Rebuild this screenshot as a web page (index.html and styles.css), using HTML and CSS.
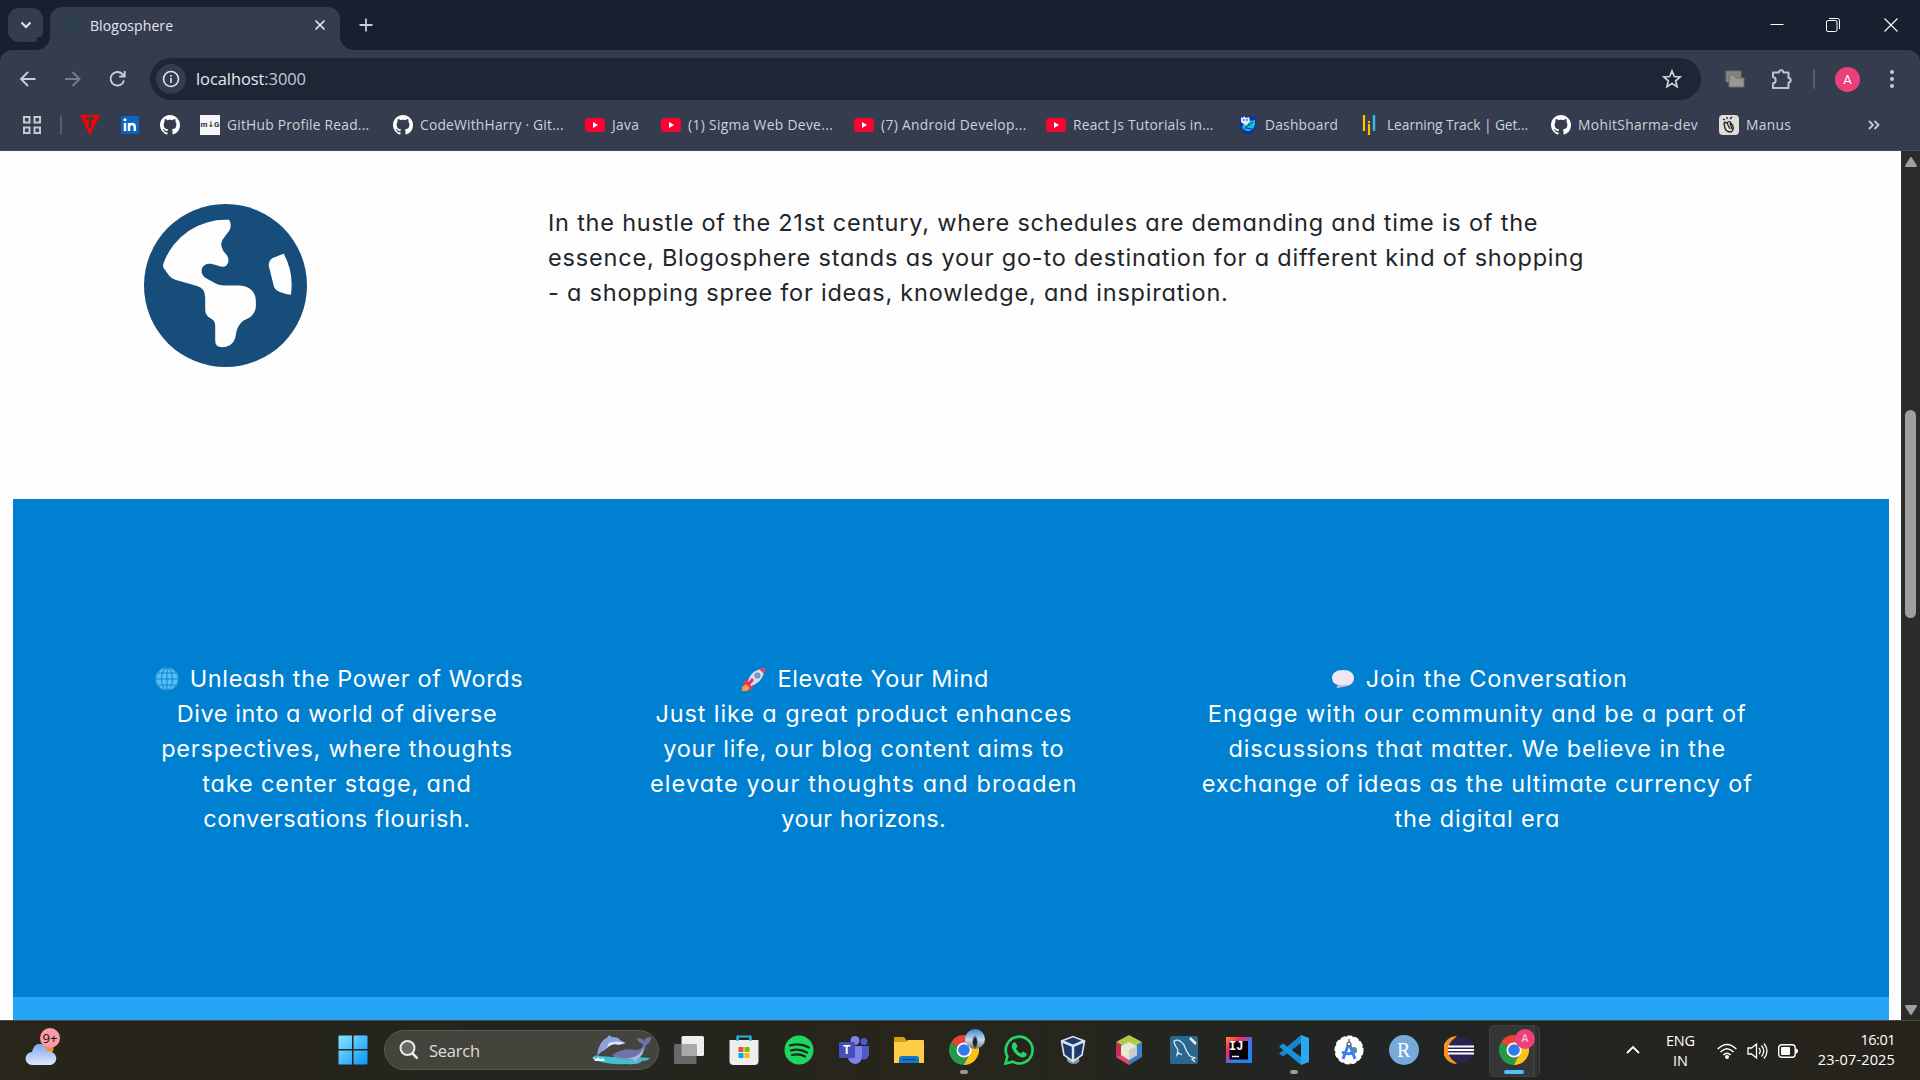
FILE: index.html
```html
<!DOCTYPE html>
<html lang="en"><head><meta charset="utf-8"><title>Blogosphere</title><link rel="stylesheet" href="styles.css"></head>
<body>
<svg class="defs" aria-hidden="true">
<symbol id="gh" viewBox="0 0 16 16"><path fill="#fff" d="M8 0C3.58 0 0 3.58 0 8c0 3.54 2.29 6.53 5.47 7.59.4.07.55-.17.55-.38 0-.19-.01-.82-.01-1.49-2.01.37-2.53-.49-2.69-.94-.09-.23-.48-.94-.82-1.13-.28-.15-.68-.52-.01-.53.63-.01 1.08.58 1.23.82.72 1.21 1.87.87 2.33.66.07-.52.28-.87.51-1.07-1.78-.2-3.64-.89-3.64-3.95 0-.87.31-1.59.82-2.15-.08-.2-.36-1.02.08-2.12 0 0 .67-.21 2.2.82.64-.18 1.32-.27 2-.27s1.36.09 2 .27c1.53-1.04 2.2-.82 2.2-.82.44 1.1.16 1.92.08 2.12.51.56.82 1.27.82 2.15 0 3.07-1.87 3.75-3.65 3.95.29.25.54.73.54 1.48 0 1.07-.01 1.93-.01 2.2 0 .21.15.46.55.38A8.01 8.01 0 0 0 16 8c0-4.42-3.58-8-8-8z"/></symbol>
<symbol id="yt" viewBox="0 0 20 20"><rect y="3" width="20" height="14" rx="3.5" fill="#ff0033"/><path d="M8 7l5 3-5 3z" fill="#fff"/></symbol>
<symbol id="chrome" viewBox="0 0 48 48"><path d="M24 24 3.2 12A24 24 0 0 1 44.8 12z" fill="#ea4335"/><path d="M24 24 44.8 12A24 24 0 0 1 24 48z" fill="#fbc116"/><path d="M24 24 24 48A24 24 0 0 1 3.2 12z" fill="#279847"/><path d="M24 12.5H44.8L34 30z" fill="#fbc116"/><path d="M34 29.5 24 48 14 30z" fill="#279847"/><path d="M34 29.5 24 48h3l16-24z" fill="#fbc116"/><circle cx="24" cy="24" r="12" fill="#fff"/><circle cx="24" cy="24" r="9.3" fill="#3079ee"/></symbol>
</svg>
<header class="tabstrip">
 <button class="tabsearch"><svg width="12" height="8" viewBox="0 0 12 8"><path d="M1.5 1.5 6 6l4.500-4.500" fill="none" stroke="#e3e6ee" stroke-width="2"/></svg></button>
 <div class="tab"><svg class="fav" width="20" height="20" viewBox="0 0 20 20" fill="none" stroke="#21444f" stroke-width="1.300"><path d="M1 1 10 19 19 1H10M4.500 1 10 12.500 14 5H10"/></svg><span>Blogosphere</span><svg class="close" width="12" height="12" viewBox="0 0 12 12"><path d="M1.500 1.500l9 9m0-9-9 9" stroke="#e3e6ee" stroke-width="1.700"/></svg></div>
 <svg class="plus" width="14" height="14" viewBox="0 0 14 14"><path d="M7 .5v13M.5 7h13" stroke="#c5cde0" stroke-width="1.800"/></svg>
 <div class="winctl"><svg width="14" height="14" viewBox="0 0 14 14"><path d="M.5 6.500h13" stroke="#fff"/></svg><svg width="14" height="14" viewBox="0 0 14 14" fill="none" stroke="#fff"><rect x=".5" y="2.500" width="10.500" height="11" rx="1.500"/><path d="M3 .5h8.500a2 2 0 0 1 2 2V11"/></svg><svg width="14" height="14" viewBox="0 0 14 14"><path d="M.5.5l13 13m0-13-13 13" stroke="#fff" stroke-width="1.100"/></svg></div>
</header>
<nav class="toolbar">
 <svg class="ic" viewBox="0 0 20 20" fill="none" stroke="#c5cde0" stroke-width="1.900"><path d="M17.500 10H3M10 3 3 10l7 7"/></svg>
 <svg class="ic" viewBox="0 0 20 20" fill="none" stroke="#747c8d" stroke-width="1.900"><path d="M2 10h14.500M9.500 3l7 7-7 7"/></svg>
 <svg class="ic" viewBox="0 0 20 20" fill="none" stroke="#c5cde0" stroke-width="1.900"><path d="M16 11.500A6.800 6.800 0 1 1 14.300 5L16.500 7.300M16.700 2v5.500h-5.500"/></svg>
 <div class="omnibox"><span class="info"><svg width="18" height="18" viewBox="0 0 18 18"><circle cx="9" cy="9" r="7.500" fill="none" stroke="#e3e6ee" stroke-width="1.600"/><path d="M9 8v5M9 5v1.700" stroke="#e3e6ee" stroke-width="1.600"/></svg></span><span class="url">localhost<i>:3000</i></span>
 <svg class="star" width="20" height="20" viewBox="0 0 20 20" fill="none" stroke="#cfd3de" stroke-width="1.700"><path d="M10 2l2.300 5.500 5.900.5-4.500 3.900 1.400 5.800L10 14.600l-5.100 3.100 1.400-5.800L1.800 8l5.900-.5z"/></svg></div>
 <svg class="ext" width="20" height="18" viewBox="0 0 20 18" stroke="#6c6c6c"><path d="M1 1h15v11H1z" fill="#858580"/><path d="M4 5h5l2 3h8v9H4z" fill="#989892"/></svg>
 <svg class="puz" width="22" height="22" viewBox="0 0 22 22"><path d="M2 4.500H8a2.200 2.200 0 0 1 4.400 0H17.500V10a2.200 2.200 0 0 1 0 4.400V20H2V15.500a3.300 3.300 0 0 0 0-6.500z" fill="none" stroke="#b9c3da" stroke-width="2" stroke-linejoin="round"/></svg>
 <i class="sep"></i><b class="avatar">A</b>
 <svg width="4" height="18" viewBox="0 0 4 18" fill="#c5cde0"><circle cx="2" cy="2" r="2"/><circle cx="2" cy="9" r="2"/><circle cx="2" cy="16" r="2"/></svg>
</nav>
<nav class="bookmarks">
 <svg class="bi" viewBox="0 0 20 20" fill="none" stroke="#c7c9d0" stroke-width="2"><path d="M2 2h5.500v5.500H2zM12.500 2H18v5.500h-5.500zM2 12.500h5.500V18H2zM12.500 12.500H18V18h-5.500z"/></svg>
 <i class="sep"></i>
 <svg class="bi" viewBox="0 0 20 20"><path d="M0 0h20L10 20z" fill="#f00"/><path d="M5.500 3.500h9M10 4v9" stroke="#343c4e" stroke-width="2.500"/></svg>
 <svg class="bi" viewBox="0 0 20 20"><rect x="1" y="1" width="18" height="18" rx="1.500" fill="#0a66c2"/><path d="M5 8v8M9 8v8M9 12c0-4 5.800-4 5.800 0v4" fill="none" stroke="#fff" stroke-width="2.500"/><circle cx="5" cy="4.800" r="1.500" fill="#fff"/></svg>
 <svg class="bi"><use href="#gh"/></svg>
 <a><b class="mg">m↓G</b><span>GitHub Profile Read...</span></a>
 <a><svg class="bi"><use href="#gh"/></svg><span>CodeWithHarry · Git...</span></a>
 <a><svg class="bi"><use href="#yt"/></svg><span class="wide">Java</span></a>
 <a><svg class="bi"><use href="#yt"/></svg><span class="wide">(1) Sigma Web Deve...</span></a>
 <a><svg class="bi"><use href="#yt"/></svg><span class="wide">(7) Android Develop...</span></a>
 <a><svg class="bi"><use href="#yt"/></svg><span>React Js Tutorials in...</span></a>
 <a><svg class="bi" viewBox="0 0 20 20"><path d="M2 1h16v11q-1 5-8 8-7-3-8-8z" fill="#0a35a5"/><path d="M4 13q1-7 13-8 1 9-6 11-5 0-7-3" fill="#19c0cf"/><path d="M6 14l9-7M8 13l6 1M11 10l-1-3" stroke="#0a35a5"/><path d="M3 2l2 1 1-2 2 2 3-1 1 4-2 3-3 1-4-3z" fill="#e4ecff"/><path d="M6 4v2M9 4v2" stroke="#234"/></svg><span>Dashboard</span></a>
 <a><svg class="bi" viewBox="0 0 20 20"><path d="M4 0v16M9 9v11M9 6v2" stroke="#ffc400" stroke-width="2.200"/><path d="M14 0v16" stroke="#38b6f0" stroke-width="2.500"/></svg><span class="tight">Learning Track | Get...</span></a>
 <a><svg class="bi"><use href="#gh"/></svg><span class="wide">MohitSharma-dev</span></a>
 <a><svg class="bi" viewBox="0 0 20 20"><rect width="20" height="20" rx="4" fill="#deddd9"/><path d="M5 9q0-3 2-1l2-1q2-1 3 1l2 3q1 4-2 6-5 0-6-4zM8 8l3 6M11 8l2 6M6 5 4 4M8 4V2M11 4l2-2" fill="none" stroke="#222" stroke-width="1.300"/></svg><span class="wide">Manus</span></a>
 <svg width="13" height="12" viewBox="0 0 13 12" fill="none" stroke="#c7cad3" stroke-width="1.800"><path d="M1 2l4 4-4 4M6.500 2l4 4-4 4"/></svg>
</nav>
<div class="viewport">
 <main class="page">
  <section class="intro">
   <svg class="globe" viewBox="143.800 204.200 163 163"><circle cx="225.300" cy="285.700" r="81.500" fill="#164d7a"/><path fill="#fdfdfd" d="M229 220Q232 226 229 231L223 239Q219 244 223 251L227 256Q230 262 226 266Q223 268 218 266L211 264Q205 263 202 268Q200 274 205 278L216 284Q219 285.700 224 285.700H240Q247 286 252 291Q256 296 255.700 302V307Q255 314 249 318L243 321Q237 326 236 333Q235 345 226 347Q215 349 215 341V326Q215 321 211 319Q205 316 205 310V298Q205 288 196 286L175 280Q171 278.500 169 276L164 269Q162 267 163.500 263A65.700 65.700 0 0 1 228 220z"/><path fill="#fdfdfd" d="M283.600 254Q282 254.500 273 258Q267.500 261 268.800 267L273 284Q274 290 279 292Q285 294.500 290.700 295A66 66 0 0 0 283.600 254z"/></svg>
   <p class="lead">In the hustle of the 21st century, where schedules are demanding and time is of the<br><span>essence, Blogosphere stands as your go-to destination for a different kind of shopping</span><br>- a shopping spree for ideas, knowledge, and inspiration.</p>
  </section>
  <section class="features">
   <article class="words"><h3><svg class="emo" viewBox="0 0 24 24"><circle cx="12" cy="12" r="11.800" fill="#4cc4fb"/><g fill="none" stroke="#1c78bd" stroke-width=".9"><circle cx="12" cy="12" r="11.400"/><ellipse cx="12" cy="12" rx="5.500" ry="11.200"/><path d="M12 1v22M1 12h22M3 6h18M3 18h18"/></g></svg><span>Unleash the Power of Words</span></h3><p><span>Dive into a world of diverse</span><br><span>perspectives, where thoughts</span><br><span>take center stage, and</span><br><span>conversations flourish.</span></p></article>
   <article class="mind"><h3><svg class="emo" viewBox="0 0 24 24"><path d="M5 12 1 15l1 3 5-1zM12 19l-3 4-3-1 1-5z" fill="#ee3161"/><path d="M4 17l4 4-3 3H0v-4z" fill="#ff9838"/><path d="M6 15Q8 3 23 1q-2 15-14 18z" fill="#dedce9"/><path d="M17 2q3-1 6-1 0 3-1 6z" fill="#f03b5d"/><circle cx="15.500" cy="8.500" r="3" fill="#738eb5"/><circle cx="15.500" cy="8.500" r="1.700" fill="#40b7ed"/><path d="M6 18l5-6" stroke="#e92d63" stroke-width="3"/></svg><span>Elevate Your Mind</span></h3><p><span>Just like a great product enhances</span><br><span>your life, our blog content aims to</span><br><span>elevate your thoughts and broaden</span><br><span>your horizons.</span></p></article>
   <article class="talk"><h3><svg class="emo" viewBox="0 0 24 24"><path d="M12 3c7 0 11 3.500 11 8s-4 8.500-10 8.500l-7 1.500 1-3C3 17 1 14.500 1 11c0-4.500 4-8 11-8z" fill="#efe5f3"/><path d="M3 16q7 4 16 1-4 3-8 2.500L5.500 21l1.500-3z" fill="#c9acdb"/></svg><span>Join the Conversation</span></h3><p><span>Engage with our community and be a part of</span><br><span>discussions that matter. We believe in the</span><br><span>exchange of ideas as the ultimate currency of</span><br><span>the digital era</span></p></article>
  </section>
  <section class="next"></section>
 </main>
 <aside class="scroll"><svg width="12" height="10" viewBox="0 0 12 10"><path d="M6 1 11 9H1z" fill="#9f9f9f" stroke="#9f9f9f" stroke-linejoin="round" stroke-width="2"/></svg><i></i><svg width="12" height="10" viewBox="0 0 12 10"><path d="M6 9 11 1H1z" fill="#9f9f9f" stroke="#9f9f9f" stroke-linejoin="round" stroke-width="2"/></svg></aside>
</div>
<footer class="taskbar">
 <div class="weather"><svg width="32" height="22" viewBox="0 0 32 22"><defs><linearGradient id="cl" x2="0" y2="1"><stop stop-color="#7fa5ed"/><stop offset="1" stop-color="#dfe9fc"/></linearGradient></defs><circle cx="24" cy="5" r="4.500" fill="#f58b24"/><path d="M7 21a6.500 6.500 0 0 1 0-13C9-3 20-3 22 7c12 0 12 14 2 14z" fill="url(#cl)"/></svg><b>9+</b></div>
 <svg class="start" width="30" height="30" viewBox="0 0 30 30"><defs><linearGradient id="w" gradientUnits="userSpaceOnUse" x2="30" y2="30"><stop stop-color="#8be4ff"/><stop offset="1" stop-color="#0795fb"/></linearGradient></defs><path fill="url(#w)" d="M1.500.5H14V14H.5V1.500q0-1 1-1zM15.500.5h13q1 0 1 1V14h-14zM.5 15.500H14v14H1.500q-1 0-1-1zM15.500 15.500h14v13q0 1-1 1h-13z"/></svg>
 <div class="search"><svg width="20" height="20" viewBox="0 0 20 20" fill="none" stroke="#e9e9e6"><circle cx="8.500" cy="8" r="7" stroke-width="2" fill="#696962"/><path d="M13.500 13.500l5 5" stroke-width="2.500"/></svg><span>Search</span>
 <svg class="whale" width="60" height="30" viewBox="0 0 60 30"><path d="M0 23q3-4 8-2l12 1 12-1 26 2q-2 3-8 3-3 4-16 3-24 1-34-6z" fill="#3fbfd0"/><path d="M5 20Q7 6 16 2l1-2 3 2q7 0 8 3l6 3q-6 2-9 1-8 0-12 6l-4 2q-2 3-4 3z" fill="#8d9fde"/><path d="M17 8q8-3 16 0-6 3-10 1-6 1-9 5z" fill="#e2e6fa"/><path d="M20 20q12-8 23-5 8 0 8-6-5-1-6-6 5 0 7 3 1-4 7-4 0 6-5 8-1 8-9 12l1 6-6-4q-14 1-20-4z" fill="#6c74a9"/><path d="M22 21q10 4 20 1 8-3 9-10 2 8-6 12l1 4-6-4q-12 0-18-3" fill="#aeb4e0"/><path d="M1 22l2 4h10l-2-3-3 1-2-2-2 2z" fill="#e9f8fb"/></svg></div>
 <div class="apps">
  <span><svg viewBox="0 0 30 30"><rect x="7.500" y="1" width="22.500" height="20" rx="1.500" fill="#eee"/><rect y="9" width="22.500" height="20" rx="1.500" fill="#686868"/><rect x="7.500" y="9" width="15" height="12" fill="#aaa"/></svg></span>
  <span><svg viewBox="0 0 30 30"><path d="M8.500 6V1.500h13V6" fill="none" stroke="#27b5ea" stroke-width="2"/><path d="M.5 5h29v21q0 4-4 4h-21q-4 0-4-4z" fill="#eee"/><path d="M8.500 2v4M21.500 2v4" stroke="#27b5ea" stroke-width="2"/><path d="M9.500 12h5v5h-5z" fill="#f25022"/><path d="M15.500 12h5v5h-5z" fill="#7fba00"/><path d="M9.500 18h5v5h-5z" fill="#00a4ef"/><path d="M15.500 18h5v5h-5z" fill="#ffb900"/></svg></span>
  <span><svg viewBox="0 0 30 30"><circle cx="15" cy="15" r="14.500" fill="#1ed760"/><path d="M6 10.500q10-3 19 2M7 15.500q8-2.500 16 2M8 20q7-2 13 1.500" fill="none" stroke="#16291b" stroke-width="2.200" stroke-linecap="round"/></svg></span>
  <span><svg viewBox="0 0 30 30"><circle cx="25" cy="6.500" r="3.500" fill="#5059c9"/><path d="M20 11h10v9q-2 6-8 4z" fill="#5059c9"/><circle cx="16" cy="5.500" r="4.500" fill="#7b83eb"/><path d="M9 11h14v10q-1 8-7 8-6-1-7-6z" fill="#7b83eb"/><rect y="7" width="16" height="16" rx="1.500" fill="#464eb8"/></svg><b class="teams">T</b></span>
  <span><svg viewBox="0 0 30 30"><path d="M0 3q0-1 1-1h9l3 4v5H0z" fill="#dc9b10"/><path d="M0 7h12l2-2h15q1 0 1 1v22H0z" fill="#fdcd45"/><path d="M5 28v-4q0-3 3-3h14q3 0 3 3v4z" fill="#1277c7"/><path d="M8.500 24.500h13" stroke="#064a87" stroke-width="1.200"/></svg></span>
  <span class="run"><svg><use href="#chrome"/></svg><em class="photo"></em></span>
  <span><svg viewBox="0 0 30 30"><path d="M1.500 28.500 3.400 21.500A13.400 13.400 0 1 1 8.500 26.700z" fill="none" stroke="#25d366" stroke-width="2.600"/><path d="M9 8q2-2 3.500 1l1 2.500-1.500 2q2 4 5 5l2-2 3.500 2q1 1-1 3-3 2-7-.500Q9 17 8 12.500 7.500 9.500 9 8z" fill="#25d366"/></svg></span>
  <span><svg viewBox="0 0 30 30"><path d="M8 23q7 4 12 0 2 6-6 6-7-1-6-6" fill="#8793a8"/><path d="M2.500 6 14 1.500 25.500 6 23 20l-9 6.500L5 20z" fill="#1c3a69" stroke="#dde4ef" stroke-width="1.600"/><path d="M2.500 6 14 11l11.500-5M14 11v15" fill="none" stroke="#dde4ef" stroke-width="2.500"/></svg></span>
  <span><svg viewBox="0 0 30 30"><path d="M15 0 28 7 15 15 2 7z" fill="#b0c94d"/><path d="M2 7l13 8v15L2 22z" fill="#a9354f"/><path d="M28 7v15l-13 8V15z" fill="#3e7fc4"/><path d="M2 7 8 10v10l-6 2z" fill="#c72b50"/><path d="M15 25v5L2 22l6-3z" fill="#e5496a"/><path d="M15 7l8 4v9l-8 5-8-5v-9z" fill="#e5ead2"/><path d="M15 15l8-4v9l-8 5z" fill="#c8ced0"/></svg></span>
  <span><svg viewBox="0 0 30 30"><rect x="1" y="1" width="28" height="28" rx="2" fill="#29678f"/><path d="M9 15q-4-6-4-9 5-3 10 4 3 8 6 11l5 2-3 1 3 3M9 15l-1 5 2-2 3 2" fill="none" stroke="#dceaf2" stroke-width="1.300"/><path d="M21 3l6 6" stroke="#eee" stroke-width="2.500"/></svg></span>
  <span><svg viewBox="0 0 30 30"><defs><linearGradient id="ij" x2="1" y2="1"><stop stop-color="#ff8a20"/><stop offset=".3" stop-color="#fc246b"/><stop offset=".6" stop-color="#3579f2"/><stop offset="1" stop-color="#1488f5"/></linearGradient></defs><rect x="2" y="2" width="26" height="26" fill="url(#ij)"/><rect x="5.500" y="6" width="18.500" height="18.500" fill="#080008"/><path d="M8 21.500h7" stroke="#fff" stroke-width="1.500"/></svg><b class="ij">IJ</b></span>
  <span class="run"><svg viewBox="0 0 30 30"><path d="M22 8 4 21.500 0 18.500 22 0z" fill="#1a83c9"/><path d="M22 22 4 8.500 0 11.500 22 30z" fill="#1694db"/><path d="M22 0l8 3v24l-8 3z" fill="#2ba8f2"/></svg></span>
  <span><svg viewBox="0 0 30 30"><circle cx="15" cy="15" r="13.800" fill="#fff" stroke="#fff" stroke-width="1.500" stroke-dasharray="5 2"/><circle cx="20" cy="15" r="3" fill="#34a853"/><path d="M15 8 9 24M15 8l6 16M8 17q7 4 14-1" fill="none" stroke="#3f7ff0" stroke-width="3"/><circle cx="15" cy="9" r="2" fill="#fff" stroke="#333"/><path d="M15 4v3" stroke="#333"/></svg></span>
  <span><svg viewBox="0 0 30 30"><circle cx="15" cy="15" r="15" fill="#75aadb"/></svg><b class="r">R</b></span>
  <span><svg viewBox="0 0 30 30"><path d="M13 1A14 14 0 0 0 13 29 18 18 0 0 1 13 1z" fill="#f7941e"/><circle cx="17" cy="15" r="13" fill="#2c2255"/><path d="M4 11.500h26M4 15h26M4 18.500h26" stroke="#fff" stroke-width="1.800"/></svg></span>
  <span class="active"><svg><use href="#chrome"/></svg><em>A</em></span>
 </div>
 <div class="tray">
  <svg width="14" height="9" viewBox="0 0 14 9"><path d="M1 8l6-6 6 6" fill="none" stroke="#fff" stroke-width="1.800"/></svg>
  <p class="lang">ENG<br>IN</p>
  <svg width="20" height="16" viewBox="0 0 20 16" fill="none" stroke="#fff" stroke-width="1.400"><path d="M.7 6q9.300-9 18.600 0M3.500 9q6.500-6.500 13 0M6.300 12q3.700-3.700 7.400 0"/><circle cx="10" cy="14" r="1.300" fill="#fff"/></svg>
  <svg width="21" height="18" viewBox="0 0 21 18" fill="none" stroke="#fff" stroke-width="1.300"><path d="M1 6h3.500L9.500 2v14l-5-4H1zM12 6q2.500 3 0 6M14.500 3.500q4.500 5.500 0 11M17 1.500q6 7.500 0 15"/></svg>
  <svg width="20" height="14" viewBox="0 0 20 14"><rect x=".7" y=".7" width="16.500" height="12.600" rx="3" fill="none" stroke="#fff" stroke-width="1.400"/><rect x="3" y="3" width="9" height="8" rx="1" fill="#fff"/><path d="M18 4.500q2 0 2 2.500t-2 2.500z" fill="#fff"/></svg>
  <p class="clock"><span>16:01</span><br>23-07-2025</p>
 </div>
</footer>
</body></html>
```
FILE: styles.css
```css
*{box-sizing:border-box}
body{margin:0;width:1920px;height:1080px;overflow:hidden;display:flex;flex-direction:column;font-family:"Open Sans","Noto Sans",sans-serif;background:#182030;white-space:nowrap}
svg{display:block;flex:none}
.defs{position:absolute;width:0;height:0}
p,h3{margin:0;font-weight:400}
.tabstrip{height:50px;display:flex;align-items:flex-end;background:#182030;padding-left:8px}
.tabsearch{width:35px;height:34px;border:0;border-radius:11px;background:#343c4e;margin:0 7px 8px 0;display:grid;place-items:center;padding:0}
.tab{position:relative;width:290px;height:43px;border-radius:12px 12px 0 0;background:#343c4e;display:flex;align-items:center;padding:0 14px 7px 11px;color:#e3e6ee;font-size:14px;letter-spacing:.07px}
.tab::before,.tab::after{content:"";position:absolute;bottom:0;width:13px;height:13px}
.tab::before{left:-13px;background:radial-gradient(circle at 0 0,#182030 12.500px,#343c4e 13px);width:13px;clip-path:inset(0)}
.tab::after{right:-13px;background:radial-gradient(circle at 100% 0,#182030 12.500px,#343c4e 13px)}
.fav{margin-right:9px}
.close{margin-left:auto}
.plus{margin:0 0 18px 19px}
.winctl{margin-left:auto;display:flex;gap:44px;padding:0 22px 18px 0}
.winctl svg:first-child{margin-right:-2px}
.toolbar{height:58px;flex:none;display:flex;align-items:center;background:#343c4e;border-radius:12px 12px 0 0;padding:0 26px 0 18px}
.ic{width:20px;height:20px;margin-right:25px}
.ic:nth-child(3){margin-right:22px}
.omnibox{width:1552px;height:42px;border-radius:21px;background:#1e2636;display:flex;align-items:center;padding:0 19px 0 6px}
.info{width:30px;height:30px;border-radius:50%;background:#343c4e;display:grid;place-items:center;margin-right:10px}
.url{font-size:16.500px;color:#e6e9f0;letter-spacing:-.09px;padding-bottom:1px}
.url i{font-style:normal;color:#c2c8d4}
.star{margin-left:auto}
.ext{margin-left:24px}
.puz{margin-left:26px}
.sep{width:2px;height:20px;background:#555e70;border-radius:1px}
.toolbar .sep{margin:0 20px}
.avatar{width:25px;height:25px;border-radius:50%;background:#ec407a;color:#fff;font:400 13px/25px Roboto,sans-serif;text-align:center;margin-right:30px}
.bookmarks{height:43px;flex:none;background:#343c4e;border-bottom:1px solid #484c50;display:grid;align-items:center;padding:0 0 9px 22px;grid-template-columns:38px 20px 40px 40px 40px 193px 192px 76px 193px 192px 192px 122px 191px 168px 149px 20px}
.bookmarks a{display:flex;align-items:center;color:#cdd1da;font-size:13.800px}
.bookmarks a span{line-height:20px;letter-spacing:.22px}
.bookmarks a .wide{letter-spacing:.34px}
.bookmarks a .tight{letter-spacing:-.08px}
.bi{width:20px;height:20px;margin-right:7px}
.mg{width:20px;height:20px;background:#f6f6f8;color:#333;font:700 8px/20px Roboto,"DejaVu Sans",sans-serif;text-align:center;margin-right:7px}
.viewport{height:869px;flex:none;display:flex}
.page{width:1901px;background:#fdfdfd;padding:0 12px 0 13px;overflow:hidden}
.intro{height:348px;padding:53px 0 0 131px;display:flex}
.globe{width:163px;height:163px}
.lead,.features{font:23.500px/35px Inter,sans-serif;font-feature-settings:"cv11"}
.lead{color:#212529;margin:1px 0 0 241px;letter-spacing:.78px}
.lead span{letter-spacing:.81px}
.features{height:498px;background:#0080d1;color:#fff;display:grid;grid-template-columns:560px 581.600px 1fr;padding-top:162px;text-align:center}
.words{padding-left:88px}
.talk{padding-right:89px}
.features h3{font-size:23.500px;display:flex;align-items:center;justify-content:center;gap:11px}
.words h3{letter-spacing:.63px;padding-left:4px}
.words p{letter-spacing:.59px}
.words p span:nth-of-type(2){letter-spacing:.78px}
.words p span:nth-of-type(3){letter-spacing:.87px}
.mind h3{letter-spacing:.64px;padding-left:4px}
.mind p{letter-spacing:.89px}
.mind p span:nth-of-type(2){letter-spacing:.8px}
.mind p span:nth-of-type(3){letter-spacing:1.120px}
.mind p span:nth-of-type(4){letter-spacing:.43px}
.talk h3{letter-spacing:.86px;padding-left:4px}
.talk p{letter-spacing:.87px}
.talk p span:nth-of-type(1){letter-spacing:.97px}
.emo{width:24px;height:24px}
.next{height:23px;background:#27a4f5}
.scroll{width:19px;background:#2b2b2b;display:flex;flex-direction:column;align-items:center;padding:6px 0 5px}
.scroll i{width:11px;height:208px;border-radius:6px;background:#9f9f9f;margin:243px 0 auto}
.taskbar{height:60px;flex:none;background:linear-gradient(90deg,#28251a,#24241f 30%,#28261b 48%,#222525 72%,#27231b);border-top:1px solid #4b493f;display:flex;align-items:center;color:#fff}
.weather{position:relative;width:32px;margin:9px 281px 0 25px}
.weather b{position:absolute;left:15px;top:-16px;width:20px;height:20px;border-radius:50%;background:#ff99a4;color:#111;font:400 13px/20px "Open Sans",sans-serif;text-align:center}
.start{margin-top:-1px}
.search{width:275px;height:40px;border-radius:20px;background:#45443c;border:1px solid #5a594f;margin:-1px 0 0 16px;display:flex;align-items:center;padding-left:14px;font-size:16.500px;letter-spacing:-.25px;color:#dededb}
.search svg:first-child{margin-right:10px}
.whale{margin-left:auto;margin-right:6px}
.apps{display:flex;margin-left:2px;margin-top:-1px}
.apps span{position:relative;width:55px;height:60px;display:grid;place-items:center}
.apps span:first-child svg{margin-right:-1px}
.apps svg{width:30px;height:30px}
.apps b{position:absolute;font:700 12px/14px "Liberation Sans",sans-serif}
.apps .teams{left:17px;top:23px}
.apps .ij{left:18px;top:20px;font-family:"Liberation Mono",monospace}
.apps .r{left:21px;top:19px;font:400 20px/22px "Liberation Serif",serif}
.run::after{content:"";position:absolute;bottom:6px;width:8px;height:4px;border-radius:2px;background:#999}
.apps em{position:absolute;left:29px;top:9px;width:20px;height:20px;border-radius:50%;background:#ec407a;color:#fbd;font:500 11px/20px Roboto,sans-serif;text-align:center}
.apps .photo{background:radial-gradient(ellipse 3px 7px at 50% 65%,#222 50%,transparent),linear-gradient(#3c83d3,#c5dcf0 55%,#777)}
.active::before{content:"";position:absolute;left:3px;top:5px;width:49px;height:50px;border-radius:5px;background:linear-gradient(90deg,#343735 43px,#4b4d4a 44px,#2d302e 45px);border:1px solid #3d403d}
.active svg{position:relative}
.active::after{content:"";position:absolute;bottom:6px;width:20px;height:4px;border-radius:2px;background:#4cc2ff}
.tray{margin-left:auto;margin-right:25px;display:flex;align-items:center;font-size:14.500px;line-height:20px}
.lang{text-align:center;letter-spacing:-.2px;margin:0 22px 0 26px}
.tray svg+svg{margin-left:10px}
.tray svg:first-child{margin-top:-2px}
.clock{text-align:right;margin-left:20px;margin-top:-1px;letter-spacing:.15px}
.clock span{letter-spacing:-.5px}
```
